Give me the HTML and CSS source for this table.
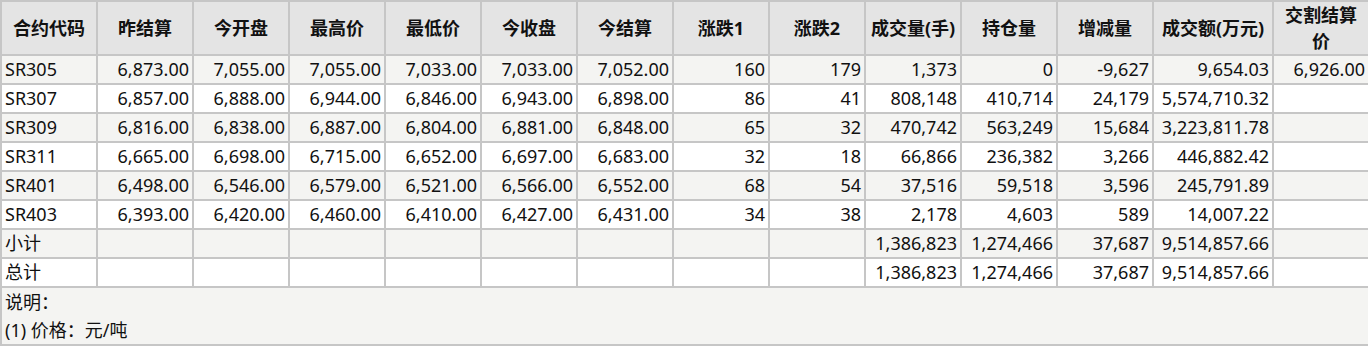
FILE: index.html
```html
<!DOCTYPE html>
<html lang="zh-CN">
<head>
<meta charset="utf-8">
<title>合约行情</title>
<link rel="stylesheet" href="styles.css">
</head>
<body>
<table class="quote">
  <colgroup>
    <col class="c-n"><col class="c-n"><col class="c-n"><col class="c-n"><col class="c-n"><col class="c-n"><col class="c-n"><col class="c-n"><col class="c-n"><col class="c-n"><col class="c-n"><col class="c-n"><col class="c-w"><col class="c-l">
  </colgroup>
  <thead>
    <tr>
      <th>合约代码</th><th>昨结算</th><th>今开盘</th><th>最高价</th><th>最低价</th><th>今收盘</th><th>今结算</th><th>涨跌1</th><th>涨跌2</th><th>成交量(手)</th><th>持仓量</th><th>增减量</th><th>成交额(万元)</th><th>交割结算价</th>
    </tr>
  </thead>
  <tbody>
    <tr class="odd"><td class="l">SR305</td><td>6,873.00</td><td>7,055.00</td><td>7,055.00</td><td>7,033.00</td><td>7,033.00</td><td>7,052.00</td><td>160</td><td>179</td><td>1,373</td><td>0</td><td>-9,627</td><td>9,654.03</td><td>6,926.00</td></tr>
    <tr><td class="l">SR307</td><td>6,857.00</td><td>6,888.00</td><td>6,944.00</td><td>6,846.00</td><td>6,943.00</td><td>6,898.00</td><td>86</td><td>41</td><td>808,148</td><td>410,714</td><td>24,179</td><td>5,574,710.32</td><td></td></tr>
    <tr class="odd"><td class="l">SR309</td><td>6,816.00</td><td>6,838.00</td><td>6,887.00</td><td>6,804.00</td><td>6,881.00</td><td>6,848.00</td><td>65</td><td>32</td><td>470,742</td><td>563,249</td><td>15,684</td><td>3,223,811.78</td><td></td></tr>
    <tr><td class="l">SR311</td><td>6,665.00</td><td>6,698.00</td><td>6,715.00</td><td>6,652.00</td><td>6,697.00</td><td>6,683.00</td><td>32</td><td>18</td><td>66,866</td><td>236,382</td><td>3,266</td><td>446,882.42</td><td></td></tr>
    <tr class="odd"><td class="l">SR401</td><td>6,498.00</td><td>6,546.00</td><td>6,579.00</td><td>6,521.00</td><td>6,566.00</td><td>6,552.00</td><td>68</td><td>54</td><td>37,516</td><td>59,518</td><td>3,596</td><td>245,791.89</td><td></td></tr>
    <tr><td class="l">SR403</td><td>6,393.00</td><td>6,420.00</td><td>6,460.00</td><td>6,410.00</td><td>6,427.00</td><td>6,431.00</td><td>34</td><td>38</td><td>2,178</td><td>4,603</td><td>589</td><td>14,007.22</td><td></td></tr>
    <tr class="odd"><td class="l">小计</td><td></td><td></td><td></td><td></td><td></td><td></td><td></td><td></td><td>1,386,823</td><td>1,274,466</td><td>37,687</td><td>9,514,857.66</td><td></td></tr>
    <tr><td class="l">总计</td><td></td><td></td><td></td><td></td><td></td><td></td><td></td><td></td><td>1,386,823</td><td>1,274,466</td><td>37,687</td><td>9,514,857.66</td><td></td></tr>
  </tbody>
  <tfoot>
    <tr>
      <td class="note" colspan="14">
        <div class="note-line">说明：</div>
        <div class="note-line">(1) 价格：元/吨</div>
      </td>
    </tr>
  </tfoot>
</table>
</body>
</html>
```

FILE: styles.css
```css
html, body {
  margin: 0;
  padding: 0;
  background: #ffffff;
}

body {
  font-family: "Noto Sans", "Noto Sans CJK SC", sans-serif;
  font-size: 18px;
  color: #111111;
}

.quote {
  border-collapse: collapse;
  table-layout: fixed;
  width: 1368px;
}

.c-n { width: 96px; }
.c-w { width: 120px; }
.c-l { width: 96px; }

.quote th,
.quote td {
  border: 2px solid #c6c6c6;
  padding: 0 3px;
  white-space: nowrap;
  overflow: hidden;
}

.quote th {
  background: #e4e4e4;
  font-weight: bold;
  text-align: center;
  white-space: normal;
  height: 51px;
  line-height: 26px;
  padding: 0 4px;
}

.quote td {
  text-align: right;
  height: 27px;
  line-height: 27px;
}

.quote td.l {
  text-align: left;
}

.quote tr.odd td {
  background: #f4f4f2;
}

.quote td.note {
  background: #f4f4f2;
  text-align: left;
  height: auto;
  line-height: 28px;
  padding: 0 3px;
}

.note-line {
  height: 28px;
}
```
